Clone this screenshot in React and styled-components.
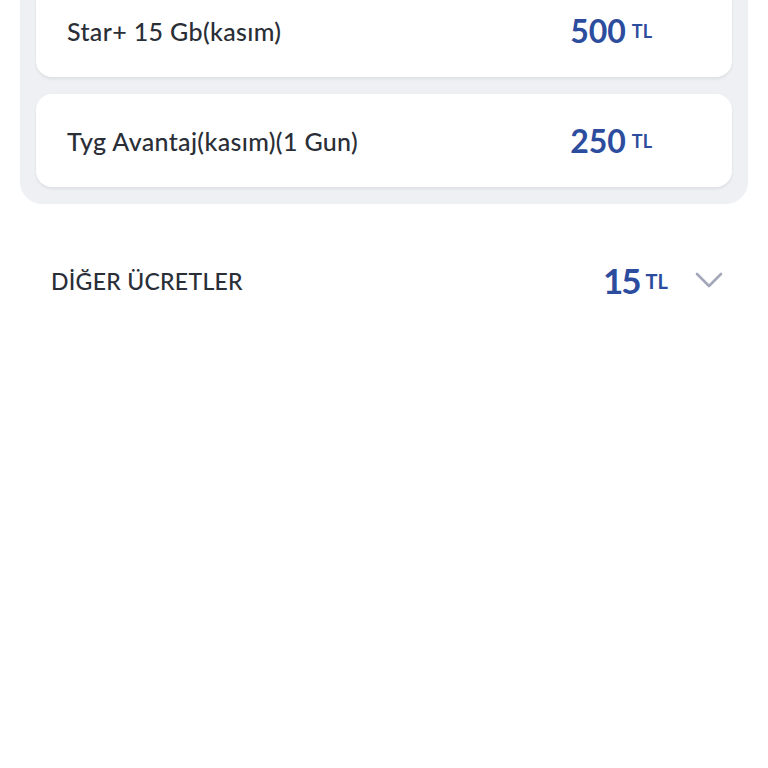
import React from 'react'
import styled, { createGlobalStyle } from 'styled-components'

const BLUE = '#2c4c9e'
const TEXT = '#2a2e37'

const GlobalStyle = createGlobalStyle`
  body {
    margin: 0;
    background: #ffffff;
    font-family: Lato, "Noto Sans", sans-serif;
    overflow: hidden;
  }
`

const Page = styled.div`
  width: 768px;
  height: 768px;
  overflow: hidden;
`

const Panel = styled.div`
  margin: -32px 20px 0;
  padding: 16px 16px 17px;
  background: #eef0f3;
  border-radius: 22px;
  display: flex;
  flex-direction: column;
  gap: 17px;
`

const Card = styled.div`
  height: 93px;
  background: #ffffff;
  border-radius: 16px;
  box-shadow: 0 2px 3px rgba(30, 40, 60, 0.08);
  display: flex;
  align-items: center;
  justify-content: space-between;
  padding: 0 80px 0 31px;
`

const CardTitle = styled.div`
  font-size: 25px;
  font-weight: 500;
  color: ${TEXT};
  letter-spacing: 0.35px;
`

const Price = styled.div`
  display: flex;
  align-items: flex-start;
  color: ${BLUE};
  font-weight: 700;
`

const Amount = styled.span`
  font-size: ${(p) => p.size}px;
  line-height: 1;
  letter-spacing: ${(p) => p.spacing || 0}px;
`

const Currency = styled.span`
  font-size: ${(p) => p.size}px;
  line-height: 1;
  margin-left: 6px;
  margin-top: ${(p) => p.offset}px;
`

const OtherRow = styled.div`
  margin-top: 59px;
  padding: 0 44px 0 51px;
  display: flex;
  align-items: center;
  justify-content: space-between;
`

const OtherTitle = styled.div`
  font-size: 23px;
  font-weight: 500;
  color: ${TEXT};
  letter-spacing: 0.3px;
`

const OtherRight = styled.div`
  display: flex;
  align-items: center;
  gap: 26px;
`

const Chevron = () => (
  <svg width="30" height="20" viewBox="0 0 30 20">
    <path d="M3 3 L15 15 L27 3" fill="none" stroke="#a3a7b9" strokeWidth="2.6" strokeLinecap="round" strokeLinejoin="round" />
  </svg>
)

const items = [
  { title: 'Star+ 15 Gb(kasım)', amount: '500' },
  { title: 'Tyg Avantaj(kasım)(1 Gun)', amount: '250' },
]

export default function App() {
  return (
    <Page>
      <GlobalStyle />
      <Panel>
        {items.map((it) => (
          <Card key={it.title}>
            <CardTitle>{it.title}</CardTitle>
            <Price>
              <Amount size={32}>{it.amount}</Amount>
              <Currency size={18} offset={7}>TL</Currency>
            </Price>
          </Card>
        ))}
      </Panel>
      <OtherRow>
        <OtherTitle>DİĞER ÜCRETLER</OtherTitle>
        <OtherRight>
          <Price>
            <Amount size={35} spacing={-2}>15</Amount>
            <Currency size={20} offset={8}>TL</Currency>
          </Price>
          <Chevron />
        </OtherRight>
      </OtherRow>
    </Page>
  )
}
